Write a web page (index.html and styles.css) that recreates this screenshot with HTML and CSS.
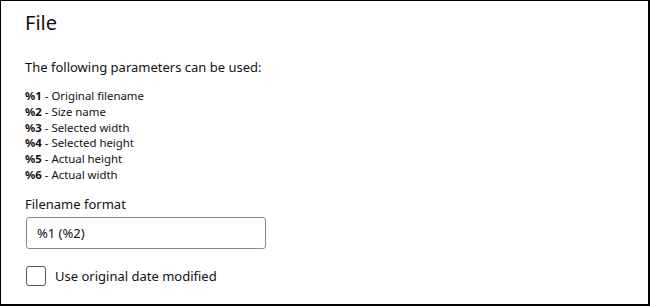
FILE: index.html
```html
<!DOCTYPE html>
<html>
<head>
<meta charset="utf-8">
<link rel="stylesheet" href="styles.css">
</head>
<body>
<div class="frame">
  <h1 class="title">File</h1>
  <p class="intro">The following parameters can be used:</p>
  <ul class="params">
    <li><b>%1</b> - Original filename</li>
    <li><b>%2</b> - Size name</li>
    <li><b>%3</b> - Selected width</li>
    <li><b>%4</b> - Selected height</li>
    <li><b>%5</b> - Actual height</li>
    <li><b>%6</b> - Actual width</li>
  </ul>
  <label class="field-label">Filename format</label>
  <div class="input">%1 (%2)</div>
  <div class="check-row">
    <span class="checkbox"></span>
    <span class="check-label">Use original date modified</span>
  </div>
</div>
</body>
</html>
```

FILE: styles.css
```css
* { box-sizing: border-box; }
html, body { margin: 0; padding: 0; background: #fff; }
body {
  width: 650px;
  height: 306px;
  font-family: "Noto Sans", "Open Sans", sans-serif;
  color: #111;
}
.frame {
  width: 650px;
  height: 306px;
  border-left: 1px solid #000;
  border-top: 1px solid #000;
  border-right: 2px solid #000;
  border-bottom: 2px solid #000;
  padding: 8px 0 0 24px;
  display: flex;
  flex-direction: column;
  align-items: flex-start;
}
.title {
  margin: 0;
  font-size: 20px;
  font-weight: 400;
  line-height: 28px;
}
.intro {
  margin: 21px 0 0;
  font-size: 13px;
  line-height: 18px;
}
.params {
  list-style: none;
  margin: 12px 0 0;
  padding: 0;
  font-size: 11.4px;
  line-height: 15.8px;
}
.params b { font-weight: 700; }
.field-label {
  margin-top: 12px;
  font-size: 13px;
  line-height: 18px;
}
.input {
  margin-top: 4px;
  margin-left: 1px;
  width: 240px;
  height: 32px;
  border: 1px solid #8a8a8a;
  border-radius: 3px;
  padding: 0 10px;
  font-size: 13px;
  line-height: 30px;
}
.check-row {
  margin-top: 17px;
  margin-left: 1px;
  display: flex;
  align-items: center;
  gap: 9px;
}
.checkbox {
  width: 20px;
  height: 20px;
  border: 1px solid #555;
  border-radius: 3px;
}
.check-label {
  font-size: 13px;
  line-height: 18px;
}
```
